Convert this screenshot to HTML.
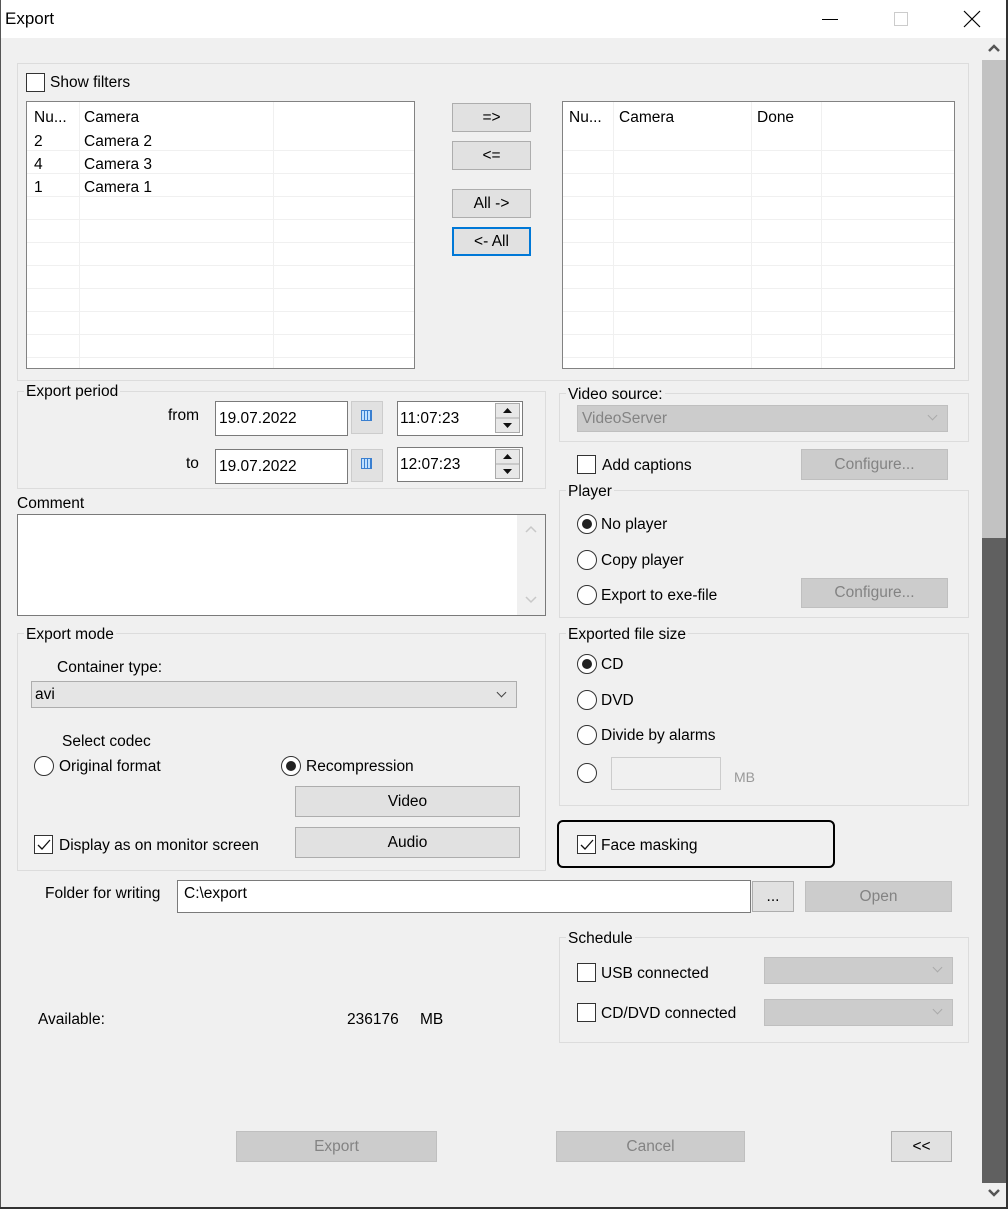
<!DOCTYPE html>
<html><head><meta charset="utf-8"><style>
*{box-sizing:border-box;margin:0;padding:0}
body{width:1008px;height:1209px;position:relative;background:#f0f0f0;font-family:"Liberation Sans",sans-serif;font-size:15.5px;color:#000;overflow:hidden}
.a{position:absolute}
.t{position:absolute;line-height:20px;white-space:nowrap;margin-top:1px}
.g{position:absolute;border:1px solid #dcdcdc}
.gl{position:absolute;background:#f0f0f0;padding:0 2px;line-height:18px;white-space:nowrap;margin-top:1px}
.btn{position:absolute;background:#e1e1e1;border:1px solid #adadad;text-align:center;white-space:nowrap}
.dis{background:#cccccc;border:1px solid #bfbfbf;color:#838383}
.in{position:absolute;background:#fff;border:1px solid #7a7a7a}
.cb{position:absolute;width:19px;height:19px;border:1px solid #333;background:#fff}
.rb{position:absolute;width:20px;height:20px;border:1px solid #333;border-radius:50%;background:#fff}
.rb.on::after{content:"";position:absolute;left:4px;top:4px;width:10px;height:10px;border-radius:50%;background:#222}
.list{position:absolute;background:#fff;border:1px solid #828282;overflow:hidden}
.row{position:absolute;left:0;right:0;height:23px;border-bottom:1px solid #f0f0f0}
.vl{position:absolute;top:0;bottom:0;width:1px;background:#f0f0f0}
.combo{position:absolute;border:1px solid #adadad;background:#e5e5e5}
.chev{position:absolute;width:7px;height:7px;border-right:1px solid #444;border-bottom:1px solid #444;transform:rotate(45deg)}
</style></head><body>
<div class="a" style="left:0;top:0;width:1008px;height:38px;background:#fff"></div>
<div class="t" style="left:5px;top:9px;font-size:17px;margin-top:0">Export</div>
<div class="a" style="left:822px;top:19px;width:16px;height:1px;background:#000"></div>
<div class="a" style="left:894px;top:12px;width:14px;height:14px;border:1px solid #ccc"></div>
<svg class="a" style="left:963px;top:10px" width="18" height="18"><path d="M1 1L17 17M17 1L1 17" stroke="#000" stroke-width="1.2"/></svg>
<div class="a" style="left:0;top:0;width:1px;height:1209px;background:#555"></div>
<div class="a" style="left:1006px;top:0;width:2px;height:1209px;background:#333"></div>
<div class="a" style="left:0;top:1207px;width:1008px;height:2px;background:#333"></div>
<div class="a" style="left:982px;top:38px;width:24px;height:1169px;background:#f0f0f0"></div>
<div class="a" style="left:982px;top:60px;width:24px;height:478px;background:#c2c2c2"></div>
<div class="a" style="left:982px;top:538px;width:24px;height:645px;background:#606060"></div>
<svg class="a" style="left:987px;top:43px" width="14" height="10"><path d="M2 8L7 3L12 8" stroke="#555" stroke-width="2.5" fill="none"/></svg>
<svg class="a" style="left:987px;top:1188px" width="14" height="10"><path d="M2 2L7 7L12 2" stroke="#555" stroke-width="2.5" fill="none"/></svg>

<div class="g" style="left:17px;top:63px;width:952px;height:318px"></div>
<div class="cb" style="left:26px;top:73px"></div>
<div class="t" style="left:50px;top:72px">Show filters</div>
<div class="list" style="left:26px;top:101px;width:389px;height:268px">
 <div class="vl" style="left:52px"></div><div class="vl" style="left:246px"></div>
 <div class="row" style="top:26px"></div><div class="row" style="top:49px"></div><div class="row" style="top:72px"></div><div class="row" style="top:95px"></div><div class="row" style="top:118px"></div><div class="row" style="top:141px"></div><div class="row" style="top:164px"></div><div class="row" style="top:187px"></div><div class="row" style="top:210px"></div><div class="row" style="top:233px"></div>
 <div class="t" style="left:7px;top:5px">Nu...</div><div class="t" style="left:57px;top:5px">Camera</div>
 <div class="t" style="left:7px;top:29px">2</div><div class="t" style="left:57px;top:29px">Camera 2</div>
 <div class="t" style="left:7px;top:52px">4</div><div class="t" style="left:57px;top:52px">Camera 3</div>
 <div class="t" style="left:7px;top:75px">1</div><div class="t" style="left:57px;top:75px">Camera 1</div>
</div>
<div class="btn" style="left:452px;top:103px;width:79px;height:29px;line-height:27px">=&gt;</div>
<div class="btn" style="left:452px;top:141px;width:79px;height:29px;line-height:27px">&lt;=</div>
<div class="btn" style="left:452px;top:189px;width:79px;height:29px;line-height:27px">All -&gt;</div>
<div class="btn" style="left:452px;top:227px;width:79px;height:29px;line-height:25px;border:2px solid #0078d7">&lt;- All</div>
<div class="list" style="left:562px;top:101px;width:393px;height:268px">
 <div class="vl" style="left:50px"></div><div class="vl" style="left:188px"></div><div class="vl" style="left:258px"></div>
 <div class="row" style="top:26px"></div><div class="row" style="top:49px"></div><div class="row" style="top:72px"></div><div class="row" style="top:95px"></div><div class="row" style="top:118px"></div><div class="row" style="top:141px"></div><div class="row" style="top:164px"></div><div class="row" style="top:187px"></div><div class="row" style="top:210px"></div><div class="row" style="top:233px"></div>
 <div class="t" style="left:6px;top:5px">Nu...</div><div class="t" style="left:56px;top:5px">Camera</div><div class="t" style="left:194px;top:5px">Done</div>
</div>

<div class="g" style="left:17px;top:391px;width:529px;height:98px"></div>
<div class="gl" style="left:24px;top:382px">Export period</div>
<div class="t" style="left:168px;top:405px">from</div>
<div class="t" style="left:186px;top:453px">to</div>
<div class="in" style="left:215px;top:401px;width:133px;height:35px"></div>
<div class="t" style="left:219px;top:408px">19.07.2022</div>
<div class="in" style="left:215px;top:449px;width:133px;height:35px"></div>
<div class="t" style="left:219px;top:456px">19.07.2022</div>
<div class="a" style="left:351px;top:401px;width:32px;height:33px;background:#e1e1e1;border:1px solid #ccc"></div>
<div class="a" style="left:361px;top:410px;width:11px;height:11px;border:1px solid #3a7fd0;background:repeating-linear-gradient(90deg,#bfe0ff 0 2px,#3a7fd0 2px 3px)"></div>
<div class="a" style="left:351px;top:449px;width:32px;height:33px;background:#e1e1e1;border:1px solid #ccc"></div>
<div class="a" style="left:361px;top:458px;width:11px;height:11px;border:1px solid #3a7fd0;background:repeating-linear-gradient(90deg,#bfe0ff 0 2px,#3a7fd0 2px 3px)"></div>
<div class="in" style="left:397px;top:401px;width:126px;height:35px"></div>
<div class="t" style="left:400px;top:408px">11:07:23</div>
<div class="in" style="left:397px;top:447px;width:126px;height:35px"></div>
<div class="t" style="left:400px;top:454px">12:07:23</div>
<div class="a" style="left:495px;top:403px;width:25px;height:30px;background:#e8e8e8;border:1px solid #aaa"></div>
<div class="a" style="left:495px;top:449px;width:25px;height:30px;background:#e8e8e8;border:1px solid #aaa"></div>
<svg class="a" style="left:495px;top:403px" width="25" height="30"><path d="M8 10L12.5 5L17 10Z M8 20L12.5 25L17 20Z" fill="#111"/><path d="M0 15H25" stroke="#aaa"/></svg>
<svg class="a" style="left:495px;top:449px" width="25" height="30"><path d="M8 10L12.5 5L17 10Z M8 20L12.5 25L17 20Z" fill="#111"/><path d="M0 15H25" stroke="#aaa"/></svg>

<div class="t" style="left:17px;top:493px">Comment</div>
<div class="in" style="left:17px;top:514px;width:529px;height:102px"></div>
<div class="a" style="left:517px;top:515px;width:28px;height:100px;background:#f0f0f0"></div>
<svg class="a" style="left:524px;top:524px" width="14" height="10"><path d="M2 8L7 3L12 8" stroke="#c8c8c8" stroke-width="1.5" fill="none"/></svg>
<svg class="a" style="left:524px;top:595px" width="14" height="10"><path d="M2 2L7 7L12 2" stroke="#c8c8c8" stroke-width="1.5" fill="none"/></svg>

<div class="g" style="left:17px;top:633px;width:529px;height:238px"></div>
<div class="gl" style="left:24px;top:625px">Export mode</div>
<div class="t" style="left:57px;top:657px">Container type:</div>
<div class="combo" style="left:31px;top:681px;width:486px;height:27px"></div>
<div class="t" style="left:35px;top:684px">avi</div>
<div class="chev" style="left:498px;top:689px"></div>
<div class="t" style="left:62px;top:731px">Select codec</div>
<div class="rb" style="left:34px;top:756px"></div>
<div class="t" style="left:59px;top:756px">Original format</div>
<div class="rb on" style="left:281px;top:756px"></div>
<div class="t" style="left:306px;top:756px">Recompression</div>
<div class="btn" style="left:295px;top:786px;width:225px;height:31px;line-height:29px">Video</div>
<div class="btn" style="left:295px;top:827px;width:225px;height:31px;line-height:29px">Audio</div>
<div class="cb" style="left:34px;top:835px"></div>
<svg class="a" style="left:35px;top:836px" width="18" height="18"><path d="M3 9L7 13L15 4" stroke="#111" stroke-width="1.3" fill="none"/></svg>
<div class="t" style="left:59px;top:835px">Display as on monitor screen</div>

<div class="t" style="left:45px;top:883px">Folder for writing</div>
<div class="in" style="left:177px;top:880px;width:574px;height:33px"></div>
<div class="t" style="left:184px;top:883px">C:\export</div>
<div class="btn" style="left:752px;top:881px;width:42px;height:31px;line-height:29px">...</div>
<div class="btn dis" style="left:805px;top:881px;width:147px;height:31px;line-height:29px">Open</div>

<div class="g" style="left:559px;top:393px;width:410px;height:49px"></div>
<div class="gl" style="left:566px;top:385px">Video source:</div>
<div class="combo" style="left:577px;top:405px;width:371px;height:27px;background:#cccccc;border-color:#bfbfbf"></div>
<div class="t" style="left:582px;top:408px;color:#838383">VideoServer</div>
<div class="chev" style="left:929px;top:412px;border-color:#aaa"></div>
<div class="cb" style="left:577px;top:455px"></div>
<div class="t" style="left:602px;top:455px">Add captions</div>
<div class="btn dis" style="left:801px;top:449px;width:147px;height:31px;line-height:29px">Configure...</div>

<div class="g" style="left:559px;top:490px;width:410px;height:128px"></div>
<div class="gl" style="left:566px;top:482px">Player</div>
<div class="rb on" style="left:577px;top:514px"></div><div class="t" style="left:601px;top:514px">No player</div>
<div class="rb" style="left:577px;top:550px"></div><div class="t" style="left:601px;top:550px">Copy player</div>
<div class="rb" style="left:577px;top:585px"></div><div class="t" style="left:601px;top:585px">Export to exe-file</div>
<div class="btn dis" style="left:801px;top:578px;width:147px;height:30px;line-height:28px">Configure...</div>

<div class="g" style="left:559px;top:633px;width:410px;height:173px"></div>
<div class="gl" style="left:566px;top:625px">Exported file size</div>
<div class="rb on" style="left:577px;top:654px"></div><div class="t" style="left:601px;top:654px">CD</div>
<div class="rb" style="left:577px;top:690px"></div><div class="t" style="left:601px;top:690px">DVD</div>
<div class="rb" style="left:577px;top:725px"></div><div class="t" style="left:601px;top:725px">Divide by alarms</div>
<div class="rb" style="left:577px;top:763px"></div>
<div class="a" style="left:611px;top:757px;width:110px;height:33px;border:1px solid #ccc;background:#f0f0f0"></div>
<div class="t" style="left:734px;top:766px;color:#999;font-size:14px">MB</div>

<div class="a" style="left:557px;top:820px;width:278px;height:48px;border:2px solid #000;border-radius:6px"></div>
<div class="cb" style="left:577px;top:835px"></div>
<svg class="a" style="left:578px;top:836px" width="18" height="18"><path d="M3 9L7 13L15 4" stroke="#111" stroke-width="1.3" fill="none"/></svg>
<div class="t" style="left:601px;top:835px">Face masking</div>

<div class="g" style="left:559px;top:937px;width:410px;height:106px"></div>
<div class="gl" style="left:566px;top:929px">Schedule</div>
<div class="cb" style="left:577px;top:963px"></div><div class="t" style="left:601px;top:963px">USB connected</div>
<div class="cb" style="left:577px;top:1003px"></div><div class="t" style="left:601px;top:1003px">CD/DVD connected</div>
<div class="combo" style="left:764px;top:957px;width:189px;height:27px;background:#cccccc;border-color:#bfbfbf"></div>
<div class="chev" style="left:934px;top:964px;border-color:#aaa"></div>
<div class="combo" style="left:764px;top:999px;width:189px;height:27px;background:#cccccc;border-color:#bfbfbf"></div>
<div class="chev" style="left:934px;top:1006px;border-color:#aaa"></div>

<div class="t" style="left:38px;top:1009px">Available:</div>
<div class="t" style="left:347px;top:1009px">236176</div>
<div class="t" style="left:420px;top:1009px">MB</div>

<div class="btn dis" style="left:236px;top:1131px;width:201px;height:31px;line-height:30px">Export</div>
<div class="btn dis" style="left:556px;top:1131px;width:189px;height:31px;line-height:30px">Cancel</div>
<div class="btn" style="left:891px;top:1131px;width:61px;height:31px;line-height:30px">&lt;&lt;</div>
</body></html>
